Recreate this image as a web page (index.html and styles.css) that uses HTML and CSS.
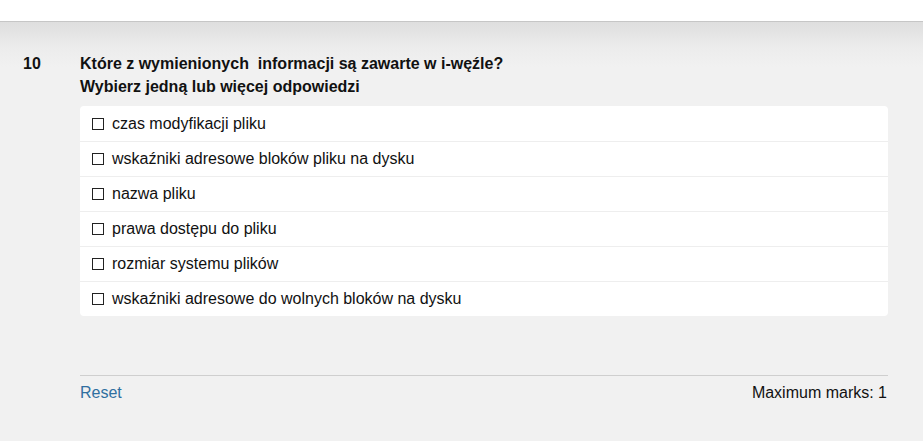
FILE: index.html
```html
<!DOCTYPE html>
<html lang="pl">
<head>
<meta charset="utf-8">
<title>Pytanie 10</title>
<link rel="stylesheet" href="styles.css">
</head>
<body>
<div class="topbar"></div>
<main class="page">
  <section class="question">
    <div class="qnum">10</div>
    <div class="qbody">
      <div class="qtitle">Które z wymienionych&nbsp; informacji są zawarte w i-węźle?</div>
      <div class="qhint">Wybierz jedną lub więcej odpowiedzi</div>
      <ul class="options">
        <li class="option"><span class="box"></span>czas modyfikacji pliku</li>
        <li class="option"><span class="box"></span>wskaźniki adresowe bloków pliku na dysku</li>
        <li class="option"><span class="box"></span>nazwa pliku</li>
        <li class="option"><span class="box"></span>prawa dostępu do pliku</li>
        <li class="option"><span class="box"></span>rozmiar systemu plików</li>
        <li class="option"><span class="box"></span>wskaźniki adresowe do wolnych bloków na dysku</li>
      </ul>
      <div class="footer">
        <a class="reset" href="#">Reset</a>
        <span class="marks">Maximum marks: 1</span>
      </div>
    </div>
  </section>
</main>
</body>
</html>
```
FILE: styles.css
```css
html, body {
  margin: 0;
  padding: 0;
}
body {
  font-family: "Liberation Sans", Arial, sans-serif;
  color: #111;
  background: #f1f1f1;
  height: 441px;
  overflow: hidden;
}
.topbar {
  height: 21px;
  background: #fff;
  border-bottom: 1px solid #c6c6c6;
}
.page {
  background: linear-gradient(to bottom, #dedede 0px, #ececec 25px, #f1f1f1 45px);
  padding-top: 30px;
  height: 389px;
}
.question {
  display: flex;
}
.qnum {
  width: 57px;
  padding-left: 23px;
  font-weight: bold;
  font-size: 16px;
  line-height: 23px;
}
.qbody {
  width: 808px;
}
.qtitle, .qhint {
  font-weight: bold;
  font-size: 16px;
  line-height: 23px;
}
.options {
  list-style: none;
  margin: 8px 0 0;
  padding: 0;
  background: #fff;
  border-radius: 4px;
}
.option {
  display: flex;
  align-items: center;
  height: 35px;
  box-sizing: border-box;
  padding-left: 12px;
  font-size: 16px;
  border-top: 1px solid #eee;
}
.option:first-child {
  border-top: none;
}
.box {
  width: 10px;
  height: 10px;
  border: 1px solid #222;
  margin-right: 8px;
  flex: none;
}
.footer {
  margin-top: 59px;
  border-top: 1px solid #cfcfcf;
  display: flex;
  justify-content: space-between;
  align-items: center;
  height: 33px;
  font-size: 16px;
  padding-right: 1px;
}
.reset {
  color: #2f6fa0;
  text-decoration: none;
}
.marks {
  color: #111;
}
```
